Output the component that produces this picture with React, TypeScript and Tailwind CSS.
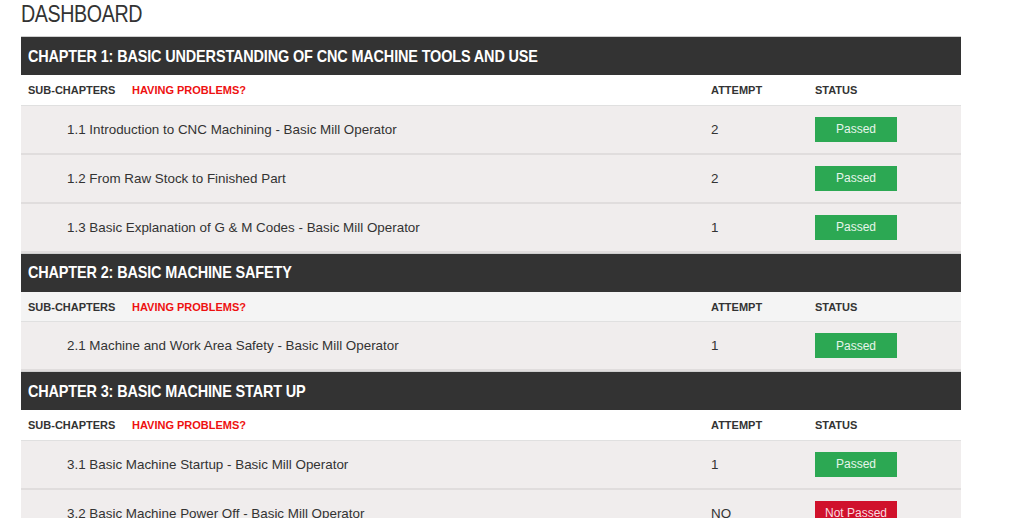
import React from "react";

type Sub = { title: string; attempt: string; passed: boolean };
type Chapter = { title: string; subBg: string; subs: Sub[] };

const chapters: Chapter[] = [
  {
    title: "CHAPTER 1: BASIC UNDERSTANDING OF CNC MACHINE TOOLS AND USE",
    subBg: "bg-white",
    subs: [
      { title: "1.1 Introduction to CNC Machining - Basic Mill Operator", attempt: "2", passed: true },
      { title: "1.2 From Raw Stock to Finished Part", attempt: "2", passed: true },
      { title: "1.3 Basic Explanation of G & M Codes - Basic Mill Operator", attempt: "1", passed: true },
    ],
  },
  {
    title: "CHAPTER 2: BASIC MACHINE SAFETY",
    subBg: "bg-[#f4f4f4]",
    subs: [{ title: "2.1 Machine and Work Area Safety - Basic Mill Operator", attempt: "1", passed: true }],
  },
  {
    title: "CHAPTER 3: BASIC MACHINE START UP",
    subBg: "bg-white",
    subs: [
      { title: "3.1 Basic Machine Startup - Basic Mill Operator", attempt: "1", passed: true },
      { title: "3.2 Basic Machine Power Off - Basic Mill Operator", attempt: "NO", passed: false },
    ],
  },
];

const StatusBadge: React.FC<{ passed: boolean }> = ({ passed }) => (
  <div
    className={
      passed
        ? "w-[82px] h-[25px] flex items-center justify-center bg-[#2ca853] text-[12px] text-[#e6f5ea]"
        : "w-[82px] h-[25px] flex items-center justify-center bg-[#d0112b] text-[12px] text-[#f8dde1]"
    }
  >
    {passed ? "Passed" : "Not Passed"}
  </div>
);

const ChapterBlock: React.FC<{ chapter: Chapter }> = ({ chapter }) => (
  <section>
    <div className="h-[39px] bg-[#333333] border-t border-[#cfcfcf] flex items-center pl-[7px] pt-[1px] overflow-hidden">
      <h2 className="text-[17px] font-bold text-white whitespace-nowrap origin-left scale-x-[0.85] tracking-[-0.01em]">
        {chapter.title}
      </h2>
    </div>
    <div className={`h-[30.5px] ${chapter.subBg} border-b border-[#e0e0e0] flex items-center pt-[1px] text-[11px] font-bold`}>
      <span className="pl-[7px] w-[111px] text-[#333]">SUB-CHAPTERS</span>
      <span className="w-[579px] text-[#ee1111]">HAVING PROBLEMS?</span>
      <span className="w-[104px] text-[#333]">ATTEMPT</span>
      <span className="text-[#333]">STATUS</span>
    </div>
    {chapter.subs.map((s) => (
      <div key={s.title} className="h-[49px] bg-[#f0eded] border-b-2 border-[#e0dddd] flex items-center text-[13.4px] text-[#333]">
        <span className="pl-[46px] w-[690px] pt-[2px]">{s.title}</span>
        <span className="w-[104px] pt-[2px]">{s.attempt}</span>
        <StatusBadge passed={s.passed} />
      </div>
    ))}
  </section>
);

const App: React.FC = () => {
  return (
    <div className="min-h-screen bg-white font-['Liberation_Sans',Arial,sans-serif]">
      <div className="ml-[21px] w-[940px]">
        <div className="h-[36px] pt-[2px]">
          <h1 className="inline-block text-[24px] leading-[24px] text-[#333] origin-left scale-x-[0.82] tracking-[-0.02em]">DASHBOARD</h1>
        </div>
        {chapters.map((c) => (
          <ChapterBlock key={c.title} chapter={c} />
        ))}
      </div>
    </div>
  );
};

export default App;
